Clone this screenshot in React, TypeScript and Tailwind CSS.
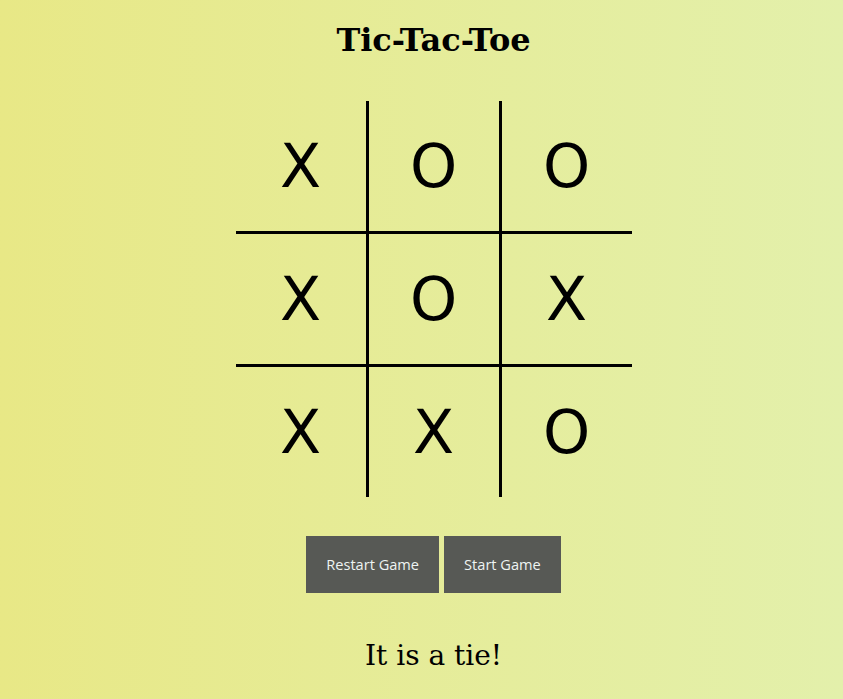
import { useState } from 'react';

type Cell = 'X' | 'O' | '';

const initialBoard: Cell[] = ['X', 'O', 'O', 'X', 'O', 'X', 'X', 'X', 'O'];

// borders only on the inner lines of the board
const cellBorder = (i: number) => {
  const col = i % 3;
  const row = Math.floor(i / 3);
  const classes: string[] = [];
  if (col === 1) classes.push('border-x-[3px] border-x-black');
  if (row === 1) classes.push('border-y-[3px] border-y-black');
  return classes.join(' ');
};

export default function App() {
  const [board, setBoard] = useState<Cell[]>(initialBoard);
  const [status, setStatus] = useState('It is a tie!');

  const restart = () => {
    setBoard(Array(9).fill('') as Cell[]);
    setStatus('');
  };

  return (
    <div className="min-h-[699px] w-full bg-gradient-to-r from-[#e8e886] to-[#e3f0ab] pl-6">
      <div className="flex flex-col items-center">
        <h1 className="mt-[21px] text-[32px] leading-[38px] font-bold text-black [font-family:'DejaVu_Serif',serif]">
          Tic-Tac-Toe
        </h1>

        <div className="mt-[42px] grid grid-cols-[130px_136px_130px] grid-rows-[130px_136px_130px]">
          {board.map((cell, i) => (
            <div
              key={i}
              className={`flex items-center justify-center text-[60px] leading-none text-black [font-family:'DejaVu_Sans',sans-serif] ${cellBorder(i)}`}
            >
              {cell}
            </div>
          ))}
        </div>

        <div className="mt-[39px] flex gap-[5px]">
          <button
            onClick={restart}
            className="h-[57px] bg-[#575955] px-5 text-[14.6px] text-[#eef4f2] [font-family:'Open_Sans',sans-serif]"
          >
            Restart Game
          </button>
          <button
            onClick={() => setStatus('')}
            className="h-[57px] bg-[#575955] px-5 text-[14.6px] text-[#eef4f2] [font-family:'Open_Sans',sans-serif]"
          >
            Start Game
          </button>
        </div>

        <p className="mt-[46px] text-[28px] leading-[34px] text-black [font-family:'DejaVu_Serif',serif]">
          {status}
        </p>
      </div>
    </div>
  );
}
